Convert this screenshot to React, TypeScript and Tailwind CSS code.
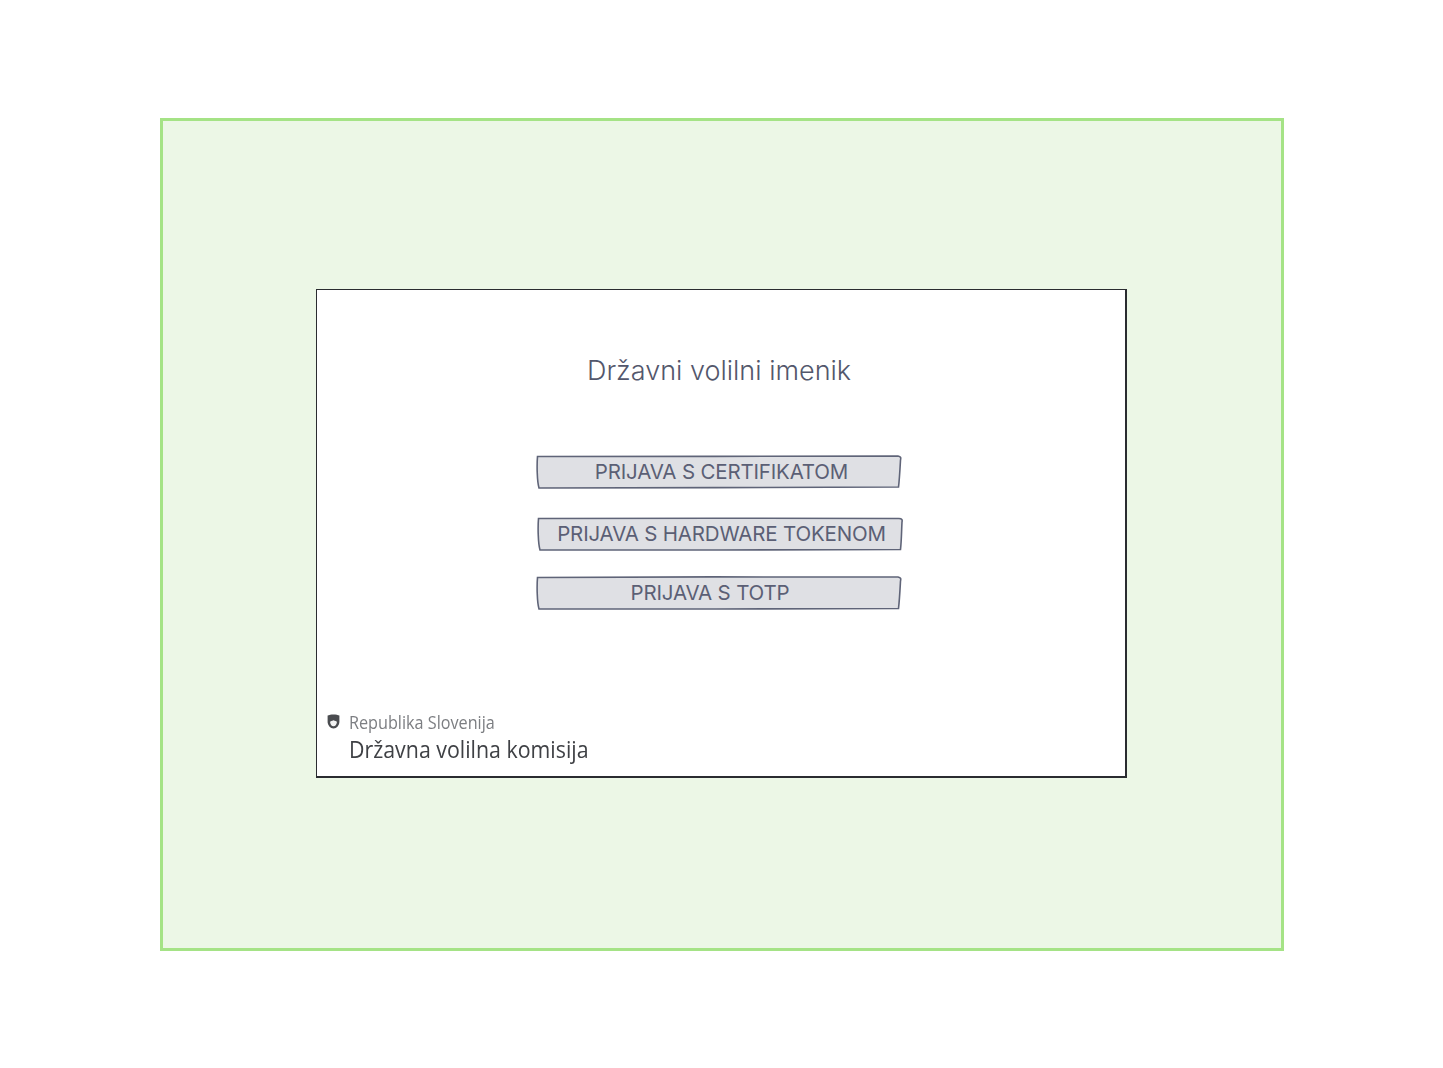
const LoginButton = ({
  label,
  className,
  textClass,
  outline,
}: {
  label: string;
  className: string;
  textClass: string;
  outline: string;
}) => (
  <button className={`relative flex h-[34px] w-[366px] items-center justify-center ${className}`}>
    {/* hand drawn outline */}
    <svg viewBox="0 0 366 34" className="absolute inset-0 h-full w-full" fill="#dfe0e4" stroke="#5f6478" strokeWidth="1.6">
      <path d={outline} />
    </svg>
    <span className={`relative text-[20.5px] leading-none tracking-[-0.18px] text-[#5b5f75] ${textClass}`}>{label}</span>
  </button>
);

export default function App() {
  return (
    <div className="h-[1068px] w-[1443px] bg-white pl-[160px] pt-[118px] font-['Inter',sans-serif]">
      <div className="h-[833px] w-[1124px] border-[3px] border-[#a5e386] bg-[#ecf7e6] pl-[153px] pt-[168px]">
        <div className="flex h-[489px] w-[811px] flex-col border-t border-l border-r-2 border-b-2 border-[#2a2c30] bg-white">
          <h1 className="ml-[270px] mt-[64px] text-[27px] font-[350] leading-[34px] text-[#53576c]">Državni volilni imenik</h1>

          <div className="ml-[219px] mt-[67px] flex flex-col">
            <LoginButton
              label="PRIJAVA S CERTIFIKATOM"
              className=""
              textClass="ml-[5px]"
              outline="M1.500 1.500 C90 0.800 280 2 362 1 C365 1.500 365 3 364.500 5 C364 14 363.500 24 362.500 32 C280 32.800 90 32.600 3 33 C1 26 0.800 10 1.500 1.500 Z"
            />
            <LoginButton
              label="PRIJAVA S HARDWARE TOKENOM"
              className="ml-[1px] mt-[28px]"
              textClass="ml-[3px]"
              outline="M1.500 1.500 C90 1.200 280 1 362 1.500 C365 1.500 365.500 3 365 5 C364.500 14 364.500 24 363.500 32.500 C280 33 90 33 3 33 C1 26 0.800 10 1.500 1.500 Z"
            />
            <LoginButton
              label="PRIJAVA S TOTP"
              className="mt-[25px]"
              textClass="mr-[18px]"
              outline="M1.500 1.500 C90 0.800 280 0.800 362 1 C365 1.500 365 3 364.500 5 C364 14 363.500 24 362.500 32.500 C280 33 90 33 3 33 C1 26 0.800 10 1.500 1.500 Z"
            />
          </div>

          {/* logo */}
          <div className="ml-[10px] mt-[100px] flex items-start font-['Open_Sans',sans-serif] font-stretch-[88%] blur-[0.3px]">
            <svg viewBox="0 0 12 14" className="mt-[4px] h-[15px] w-[13px]">
              <path d="M0.500 1.500 C3 0 9 0 11.500 1.500 L11.500 7 C11.500 10.500 9 13.500 6 13.500 C3 13.500 0.500 10.500 0.500 7 Z" fill="#4a4c50" />
              <path d="M2.800 7.500 C3.500 6 4.500 7 6 5.800 C7.500 7 8.500 6 9.200 7.500 C9 10 7.500 11.500 6 11.500 C4.500 11.500 3 10 2.800 7.500 Z" fill="#f3f3f3" />
            </svg>
            <div className="ml-[9px] flex flex-col">
              <span className="origin-left scale-x-[0.9] text-[18px] leading-[24px] text-[#7c7e82]">Republika Slovenija</span>
              <span className="mt-[1px] origin-left scale-x-[0.89] text-[24px] font-medium leading-[28px] text-[#3f4145]">Državna volilna komisija</span>
            </div>
          </div>
        </div>
      </div>
    </div>
  );
}
